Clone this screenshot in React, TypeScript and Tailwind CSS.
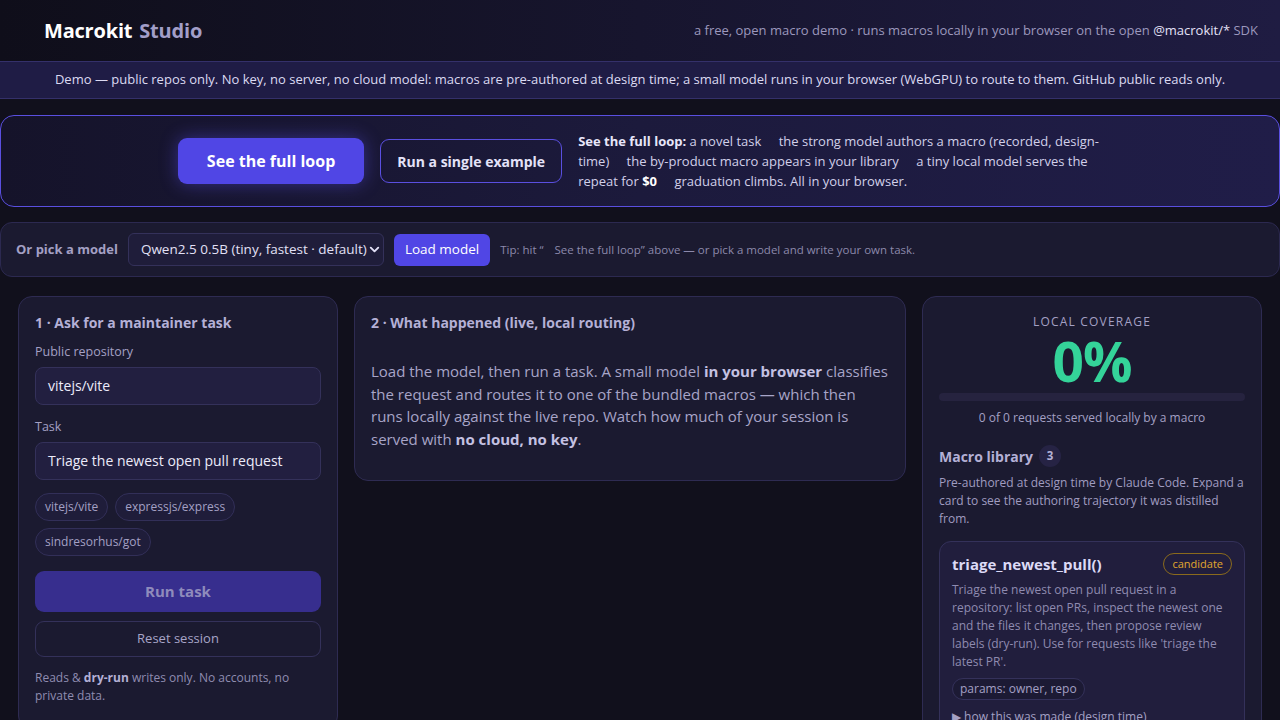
import { ChevronDown } from 'lucide-react'

const chips = ['vitejs/vite', 'expressjs/express', 'sindresorhus/got']

function Gap({ w = 'w-[14px]' }: { w?: string }) {
  return <span className={`inline-block ${w}`} />
}

export default function App() {
  return (
    <div className="min-h-screen bg-[#11101c] text-[#d8d6ee] font-['Open_Sans',sans-serif] overflow-hidden">
      {/* header */}
      <header className="h-[61px] flex items-center justify-between px-[44px] pr-[22px] bg-gradient-to-r from-[#0f0e1a] via-[#17152e] to-[#1f1c42]">
        <h1 className="text-[20px] font-bold text-white tracking-[-0.2px]">
          Macrokit <span className="text-[#a29ec8] ml-[2px]">Studio</span>
        </h1>
        <p className="text-[13px] text-[#9c98bd]">
          a free, open macro demo · runs macros locally in your browser on the open{' '}
          <span className="text-[#e4e2f8]">@macrokit/*</span> SDK
        </p>
      </header>

      {/* demo banner */}
      <div className="h-[38px] flex items-center justify-center bg-[#1f1c45] border-y border-[#34306a] text-[13px] text-[#dcdaf2]">
        Demo — public repos only. No key, no server, no cloud model: macros are pre-authored at design time; a small model runs in your browser (WebGPU) to route to them. GitHub public reads only.
      </div>

      {/* hero */}
      <div className="mt-[16px] h-[92px] rounded-[14px] border border-[#5a4fe0] bg-gradient-to-r from-[#15132a] via-[#1c1a3c] to-[#201d48] flex items-center justify-center gap-[16px]">
        <button className="h-[46px] px-[29px] rounded-[9px] bg-[#5046e5] text-white text-[16px] font-bold shadow-[0_0_18px_rgba(90,80,240,0.45)]">
          See the full loop
        </button>
        <button className="h-[44px] px-[16px] rounded-[9px] border border-[#5a4fe0] text-[#e4e2f8] text-[14px] font-bold">
          Run a single example
        </button>
        <p className="w-[524px] text-[13px] leading-[20px] text-[#d2d0ea]">
          <b className="text-[#e8e6fa]">See the full loop:</b> a novel task <Gap />the strong model authors a macro (recorded, design-time) <Gap />the by-product macro appears in your library <Gap />a tiny local model serves the repeat for <b className="text-white">$0</b> <Gap />graduation climbs. All in your browser.
        </p>
      </div>

      {/* model row */}
      <div className="mt-[15px] h-[55px] rounded-[12px] border border-[#2c2950] bg-[#1b1a30] flex items-center px-[15px] gap-[10px]">
        <span className="text-[13px] font-bold text-[#a4a0c4]">Or pick a model</span>
        <div className="h-[33px] w-[256px] rounded-[6px] border border-[#34315a] bg-[#1f1d3a] flex items-center justify-between pl-[12px] pr-[8px] text-[13.5px] text-[#e2e0f6] whitespace-nowrap">
          Qwen2.5 0.5B (tiny, fastest · default)
          <ChevronDown size={15} strokeWidth={3} className="text-[#e2e0f6] shrink-0" />
        </div>
        <button className="h-[32px] px-[11px] rounded-[6px] bg-[#5046e5] text-white text-[13.5px]">Load model</button>
        <span className="text-[11.5px] text-[#8c89ab]">
          Tip: hit “ <Gap w="w-[8px]" />See the full loop” above — or pick a model and write your own task.
        </span>
      </div>

      {/* columns */}
      <div className="mt-[19px] px-[18px] flex items-start gap-[16px]">
        {/* col 1 */}
        <section className="w-[320px] rounded-[14px] border border-[#2e2b52] bg-[#1b1a30] px-[16px] pt-[15px] pb-[24px]">
          <h2 className="text-[14px] font-bold text-[#b4b0d6]">1 · Ask for a maintainer task</h2>
          <label className="block mt-[10px] text-[12.5px] text-[#a4a0c4]">Public repository</label>
          <div className="mt-[5px] h-[38px] rounded-[8px] border border-[#34315a] bg-[#221f40] flex items-center px-[12px] text-[14px] text-[#ecebfa]">
            vitejs/vite
          </div>
          <label className="block mt-[13px] text-[12.5px] text-[#a4a0c4]">Task</label>
          <div className="mt-[5px] h-[38px] rounded-[8px] border border-[#34315a] bg-[#221f40] flex items-center px-[12px] text-[14px] text-[#ecebfa]">
            Triage the newest open pull request
          </div>
          <div className="mt-[13px] flex flex-wrap gap-x-[7px] gap-y-[7px]">
            {chips.map((c) => (
              <span key={c} className="h-[28px] flex items-center px-[9px] rounded-full border border-[#322f58] bg-[#1f1d3a] text-[12px] text-[#a4a0c4]">
                {c}
              </span>
            ))}
          </div>
          <button className="mt-[15px] w-full h-[41px] rounded-[9px] bg-[#372e8e] text-[15px] font-bold text-[#8f8bbc]">Run task</button>
          <button className="mt-[9px] w-full h-[36px] rounded-[9px] border border-[#34315a] text-[13px] text-[#a8a5c8]">Reset session</button>
          <p className="mt-[12px] text-[12px] leading-[18px] text-[#8f8cb0]">
            Reads &amp; <b className="text-[#b4b0d6]">dry-run</b> writes only. No accounts, no private data.
          </p>
        </section>

        {/* col 2 */}
        <section className="w-[552px] rounded-[14px] border border-[#2e2b52] bg-[#1b1a30] px-[16px] pt-[15px] pb-[30px]">
          <h2 className="text-[14px] font-bold text-[#b4b0d6]">2 · What happened (live, local routing)</h2>
          <p className="mt-[27px] text-[15px] leading-[22.5px] text-[#a8a5c8]">
            Load the model, then run a task. A small model <b className="text-[#c4c1e2]">in your browser</b> classifies the request and routes it to one of the bundled macros — which then runs locally against the live repo. Watch how much of your session is served with <b className="text-[#c4c1e2]">no cloud, no key</b>.
          </p>
        </section>

        {/* col 3 */}
        <section className="w-[340px] rounded-[14px] border border-[#2e2b52] bg-[#1b1a30] px-[16px] pt-[16px] pb-[24px]">
          <div className="text-center text-[12px] tracking-[1.2px] text-[#a4a0c4]">LOCAL COVERAGE</div>
          <div className="text-center text-[55px] leading-[60px] font-bold text-[#34d399] tracking-[-1px]">0%</div>
          <div className="mt-[2px] h-[8px] rounded-full bg-[#26233f]" />
          <div className="mt-[8px] text-center text-[12px] text-[#a4a0c4]">0 of 0 requests served locally by a macro</div>
          <div className="mt-[18px] flex items-center gap-[6px]">
            <span className="text-[14px] font-bold text-[#b4b0d6]">Macro library</span>
            <span className="h-[22px] min-w-[22px] px-[6px] rounded-full bg-[#262344] text-[11.5px] font-bold text-[#b4b0d6] flex items-center justify-center">3</span>
          </div>
          <p className="mt-[7px] text-[12px] leading-[18px] text-[#a09cc0]">
            Pre-authored at design time by Claude Code. Expand a card to see the authoring trajectory it was distilled from.
          </p>
          <div className="mt-[13px] rounded-[12px] border border-[#34315a] bg-[#211e3d] px-[12px] pt-[11px] pb-[10px]">
            <div className="flex items-center justify-between">
              <span className="text-[15px] font-bold text-[#dcdaf6]">triage_newest_pull()</span>
              <span className="h-[22px] px-[8px] rounded-full border border-[#8a6a1c] text-[11px] text-[#e2a82e] flex items-center">candidate</span>
            </div>
            <p className="mt-[5px] text-[12px] leading-[18px] text-[#8f8bb0]">
              Triage the newest open pull request in a repository: list open PRs, inspect the newest one and the files it changes, then propose review labels (dry-run). Use for requests like 'triage the latest PR'.
            </p>
            <span className="mt-[7px] inline-flex h-[22px] items-center px-[7px] rounded-full border border-[#34315a] bg-[#1c1a34] text-[12px] text-[#a4a0c4]">
              params: owner, repo
            </span>
            <div className="mt-[8px] text-[12px] text-[#a4a0c4]">▶ how this was made (design time)</div>
          </div>
        </section>
      </div>
    </div>
  )
}
